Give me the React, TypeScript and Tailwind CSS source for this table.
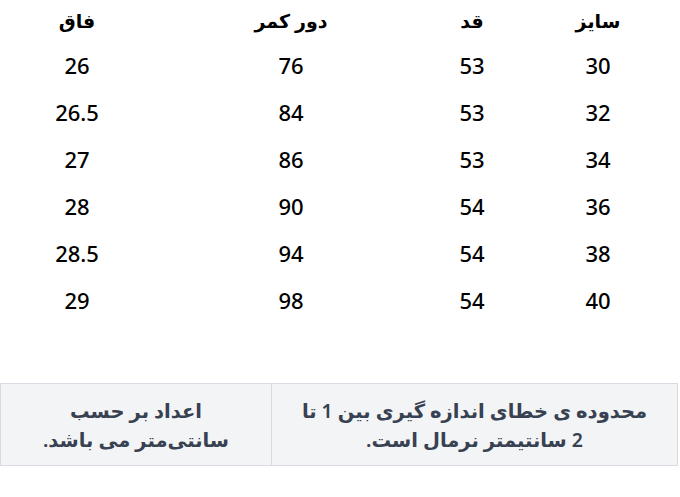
import React from 'react';

const rows = [
  ['30', '53', '76', '26'],
  ['32', '53', '84', '26.5'],
  ['34', '53', '86', '27'],
  ['36', '54', '90', '28'],
  ['38', '54', '94', '28.5'],
  ['40', '54', '98', '29'],
];

const cols = 'grid grid-cols-[164px_88px_274px_154px]';

export default function App() {
  return (
    <div dir="rtl" className="w-[680px] h-[497px] bg-white font-['Noto_Sans','DejaVu_Sans',sans-serif] text-black">
      {/* size table */}
      <div className={`${cols} h-[42px] items-center text-[19px] font-bold text-center`}>
        <div>سایز</div>
        <div>قد</div>
        <div>دور کمر</div>
        <div>فاق</div>
      </div>
      {rows.map((r) => (
        <div key={r[0]} className={`${cols} h-[47px] items-center text-[22px] font-medium text-center`}>
          {r.map((c, i) => (
            <div key={i}>{c}</div>
          ))}
        </div>
      ))}

      {/* note */}
      <div className="mt-[59px] mr-[2px] flex h-[83px] border border-[#d8dce2] bg-[#f3f4f6] text-[19.5px] font-semibold leading-[29px] text-[#374151] text-center">
        <div className="w-[406px] flex items-center justify-center border-l border-[#d8dce2]">
          محدوده ی خطای اندازه گیری بین 1 تا
          <br />
          2 سانتیمتر نرمال است.
        </div>
        <div className="flex-1 flex items-center justify-center">
          اعداد بر حسب
          <br />
          سانتی‌متر می باشد.
        </div>
      </div>
    </div>
  );
}
